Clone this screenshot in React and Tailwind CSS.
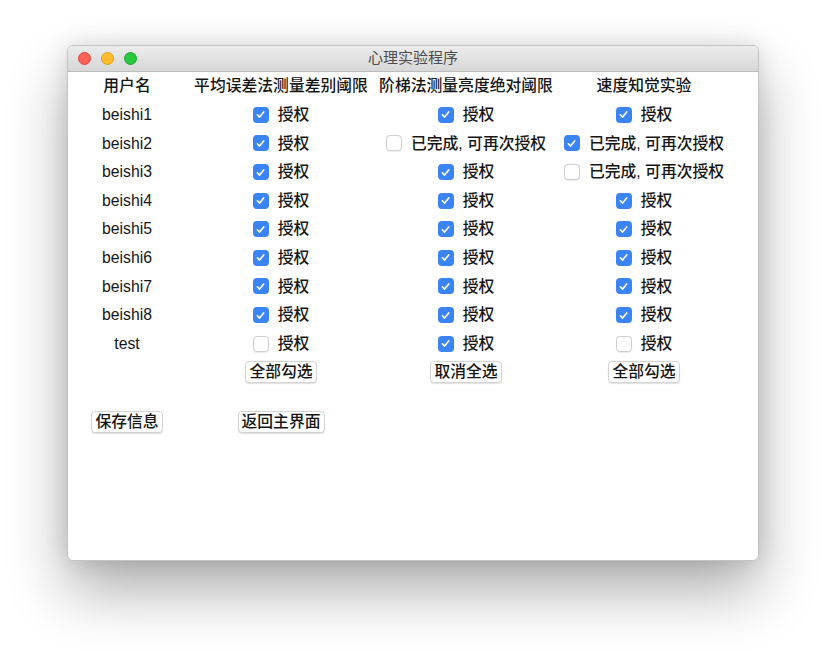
import React, { useState } from 'react';

const EXPERIMENTS = ['平均误差法测量差别阈限', '阶梯法测量亮度绝对阈限', '速度知觉实验'];

const USERS = [
  { name: 'beishi1', perms: [{ on: true }, { on: true }, { on: true }] },
  { name: 'beishi2', perms: [{ on: true }, { on: false, done: true }, { on: true, done: true }] },
  { name: 'beishi3', perms: [{ on: true }, { on: true }, { on: false, done: true }] },
  { name: 'beishi4', perms: [{ on: true }, { on: true }, { on: true }] },
  { name: 'beishi5', perms: [{ on: true }, { on: true }, { on: true }] },
  { name: 'beishi6', perms: [{ on: true }, { on: true }, { on: true }] },
  { name: 'beishi7', perms: [{ on: true }, { on: true }, { on: true }] },
  { name: 'beishi8', perms: [{ on: true }, { on: true }, { on: true }] },
  { name: 'test', perms: [{ on: false }, { on: true }, { on: false }] },
];

const Check = ({ checked, onChange, label }) => (
  <button type="button" onClick={onChange} className="flex items-center gap-[9px] cursor-default">
    <span
      className={`w-4 h-4 rounded-[4px] flex items-center justify-center ${
        checked ? 'bg-[#3b84f6]' : 'bg-white border border-[#cfcfcf] shadow-[0_0.5px_1px_rgba(0,0,0,0.08)]'
      }`}
    >
      {checked && (
        <svg width="11" height="11" viewBox="0 0 12 12" fill="none">
          <path d="M2.6 6.3 L5 8.8 L9.5 3.2" stroke="white" strokeWidth="1.8" strokeLinecap="round" strokeLinejoin="round" />
        </svg>
      )}
    </span>
    <span>{label}</span>
  </button>
);

const MacButton = ({ children }) => (
  <button
    type="button"
    className="bg-white border border-[#d4d4d4] rounded-[4px] px-[3px] h-[22px] leading-[20px] shadow-[0_1px_1px_rgba(0,0,0,0.12)]"
  >
    {children}
  </button>
);

export default function App() {
  const [rows, setRows] = useState(USERS);

  const toggle = (r, c) => {
    setRows(prev => prev.map((u, i) => i !== r ? u : { ...u, perms: u.perms.map((p, j) => j !== c ? p : { ...p, on: !p.on }) }));
  };

  const cell = 'h-[28.6px] flex items-center justify-center';

  return (
    <div
      className="w-[826px] h-[650px] bg-white pl-[67px] pt-[45px] text-[#161616] text-[15.8px] font-medium"
      style={{ fontFamily: '"Liberation Sans", "Noto Sans CJK SC", sans-serif' }}
    >
      <div className="w-[692px] h-[516px] bg-white rounded-[6px] border border-[#c4c4c4] overflow-hidden shadow-[0_30px_60px_rgba(0,0,0,0.32),0_0_22px_rgba(0,0,0,0.12)] flex flex-col">
        <div className="h-[26px] shrink-0 bg-gradient-to-b from-[#ececec] to-[#d7d7d7] border-b border-[#bdbdbd] flex items-center relative">
          <div className="flex items-center gap-[10px] pl-[10px]">
            <span className="w-[13px] h-[13px] rounded-full bg-[#fe5f57] border border-[#e2463f]" />
            <span className="w-[13px] h-[13px] rounded-full bg-[#febc2e] border border-[#e1a116]" />
            <span className="w-[13px] h-[13px] rounded-full bg-[#28c840] border border-[#1aab29]" />
          </div>
          <div className="absolute inset-0 flex items-center justify-center text-[15px] font-normal text-[#4d4d4d]">心理实验程序</div>
        </div>

        <div className="grid grid-cols-[122px_186px_184px_172px] -ml-[2px]">
          <div className={cell}>用户名</div>
          {EXPERIMENTS.map(e => (
            <div key={e} className={cell}>{e}</div>
          ))}

          {rows.map((u, r) => (
            <React.Fragment key={u.name}>
              <div className={cell}>{u.name}</div>
              {u.perms.map((p, c) => (
                <div key={c} className={cell}>
                  <Check checked={p.on} onChange={() => toggle(r, c)} label={p.done ? '已完成, 可再次授权' : '授权'} />
                </div>
              ))}
            </React.Fragment>
          ))}

          <div className={cell} />
          <div className={cell}><MacButton>全部勾选</MacButton></div>
          <div className={cell}><MacButton>取消全选</MacButton></div>
          <div className={cell}><MacButton>全部勾选</MacButton></div>

          <div className="h-[23px] col-span-4" />

          <div className="h-[24px] flex items-center justify-center"><MacButton>保存信息</MacButton></div>
          <div className="h-[24px] flex items-center justify-center"><MacButton>返回主界面</MacButton></div>
        </div>
      </div>
    </div>
  );
}
